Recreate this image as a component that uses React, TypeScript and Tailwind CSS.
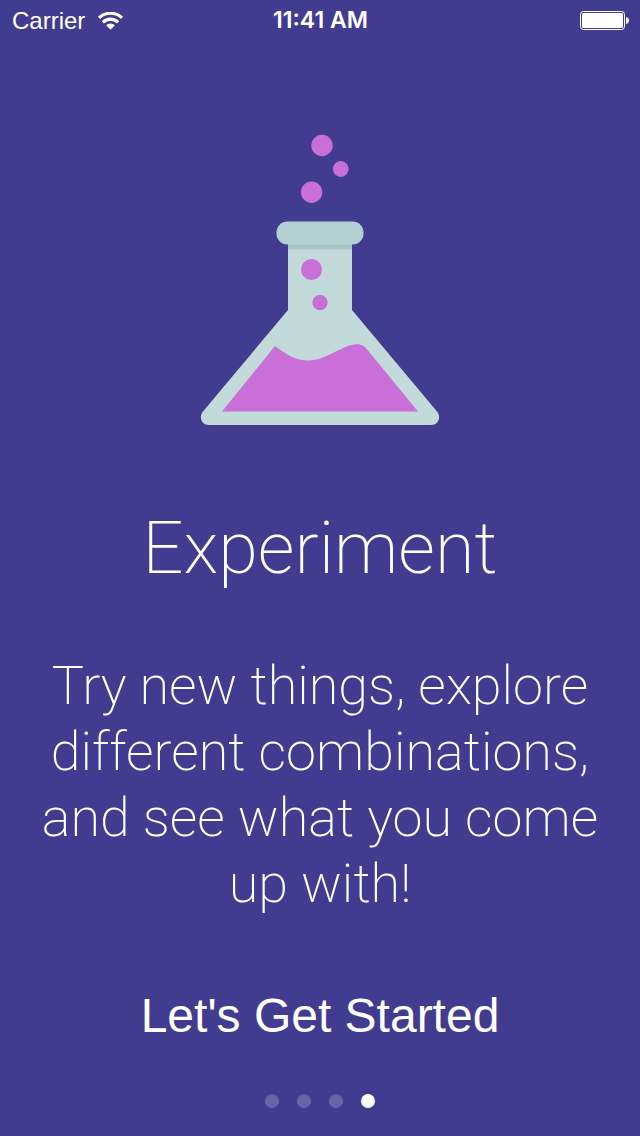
const STEPS = ["Step 1", "Step 2", "Step 3", "Step 4"];
const ACTIVE_STEP = 3;

function WifiIcon() {
  return (
    <svg className="h-[18px] w-[25px]" viewBox="0 0 25 18" fill="none" aria-hidden="true">
      <path d="M1 5.800C4.200 2.600 8 1.200 12.500 1.200S20.800 2.600 24 5.800" stroke="white" strokeWidth="3.200" />
      <path d="M4.900 10.300C7 8.200 9.600 7.100 12.500 7.100s5.500 1.100 7.600 3.200" stroke="white" strokeWidth="3.100" />
      <path d="M8.200 13.400C9.400 12.200 10.900 11.500 12.500 11.500s3.100.700 4.300 1.900L12.500 17.700Z" fill="white" />
    </svg>
  );
}

function BatteryIcon() {
  return (
    <svg className="h-[19px] w-[49px]" viewBox="0 0 49 19" aria-hidden="true">
      <rect x="0.5" y="0.5" width="44" height="18" rx="3" fill="none" stroke="white" />
      <rect x="2" y="2" width="41" height="15" rx="1.5" fill="white" />
      <path d="M46 6c2 .6 3 1.900 3 3.500s-1 2.900-3 3.500Z" fill="white" />
    </svg>
  );
}

function StatusBar() {
  return (
    <header className="grid h-[41px] grid-cols-3 items-center pr-[11px] pl-3 text-2xl leading-none">
      <div className="flex items-center gap-[13px]">
        <span>Carrier</span>
        <WifiIcon />
      </div>
      <time className="text-center font-[Inter] text-[23px] leading-[25px] font-semibold">11:41 AM</time>
      <div className="flex justify-end">
        <BatteryIcon />
      </div>
    </header>
  );
}

function Flask() {
  return (
    <svg className="h-[292px] w-60" viewBox="200 134 240 292" aria-hidden="true">
      <path
        d="M288 240H352V310L437 411.500C441.500 417 438.500 425 431 425H209C201.500 425 198.500 417 203 411.500L288 310Z"
        fill="#c3dadb"
      />
      <path d="M288 243H352V249.500H288Z" fill="#a9c2c3" />
      <rect x="276.500" y="221.500" width="87" height="23" rx="11" fill="#b4d1d1" />
      <path
        d="M275 346C287 355 296 360.500 308 360.500C327 360.500 343 344.300 357 344.300C362 344.300 365 346.500 368 350.500L418 411.500H222Z"
        fill="#ca6fd7"
      />
      <g fill="#ca6fd7">
        <circle cx="322" cy="145.500" r="10.700" />
        <circle cx="340.700" cy="169" r="7.900" />
        <circle cx="311.600" cy="192.300" r="10.700" />
        <circle cx="311.500" cy="269.500" r="10.500" />
        <circle cx="320" cy="302.500" r="7.700" />
      </g>
    </svg>
  );
}

export default function App() {
  return (
    <div className="flex min-h-screen flex-col bg-[#423c91] font-['Liberation_Sans',Arial,sans-serif] text-white">
      <StatusBar />
      <main className="flex flex-1 flex-col items-center px-6 pt-[93px]">
        <Flask />
        <h1 className="mt-[78px] font-[Roboto,sans-serif] text-[72px] leading-[90px] font-extralight">Experiment</h1>
        <p className="mt-[59px] text-center font-[Roboto,sans-serif] text-[54px] leading-[66px] font-extralight">
          Try new things, explore
          <br />
          different combinations,
          <br />
          and see what you come
          <br />
          up with!
        </p>
        <button type="button" className="mt-[69px] text-[48px] leading-[60px]">
          Let's Get Started
        </button>
      </main>
      <nav aria-label="Steps" className="flex justify-center gap-[18px] pb-7">
        {STEPS.map((label, index) => (
          <button
            key={label}
            type="button"
            aria-label={label}
            aria-current={index === ACTIVE_STEP ? "step" : undefined}
            className={`size-3.5 rounded-full ${index === ACTIVE_STEP ? "bg-white" : "bg-[#6863a7]"}`}
          />
        ))}
      </nav>
    </div>
  );
}
